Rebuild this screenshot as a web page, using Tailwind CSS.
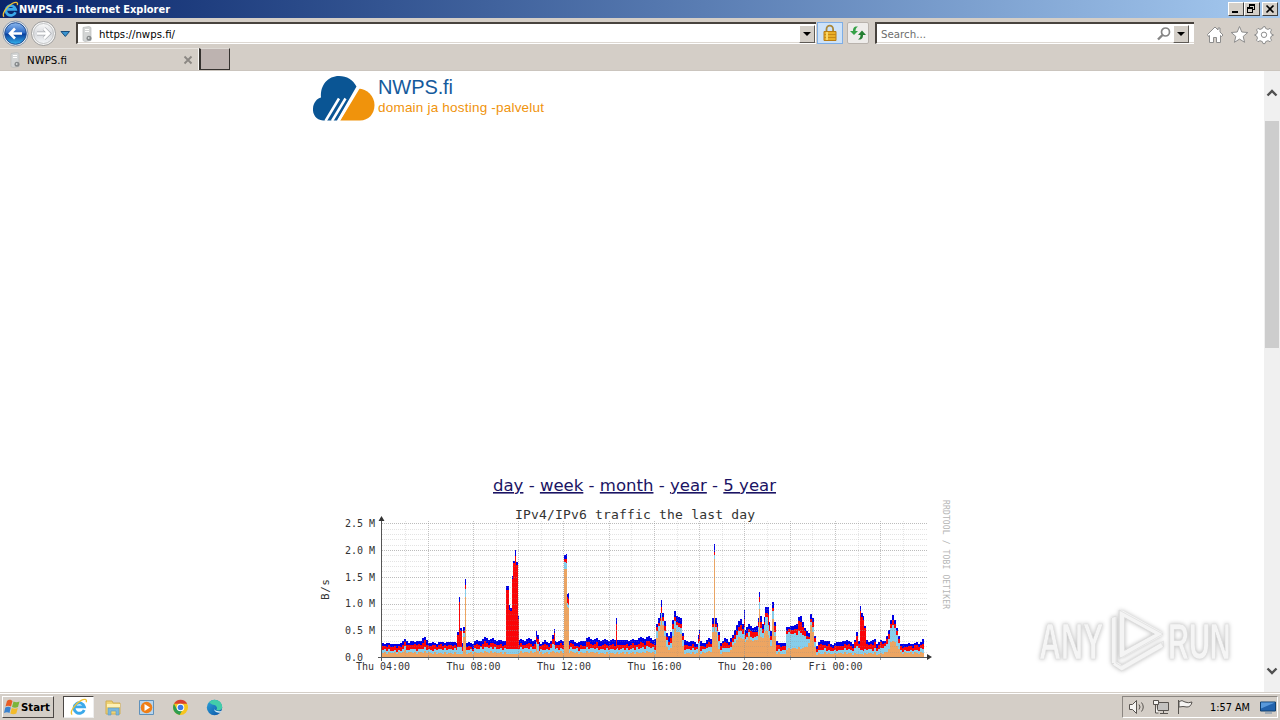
<!DOCTYPE html>
<html lang="en">
<head>
    <meta charset="UTF-8" />
    <meta name="viewport" content="width=device-width, initial-scale=1.0"/>
    <title>NWPS.fi - Internet Explorer</title>
    <script src="https://cdn.jsdelivr.net/npm/@tailwindcss/browser@4"></script>
</head>
<body class="w-[1280px] h-[720px] overflow-hidden bg-white text-black font-['DejaVu_Sans',sans-serif] text-[11px] flex flex-col">

<!-- shared shapes -->
<svg class="absolute w-0 h-0">
    <defs>
        <linearGradient id="blueBtn" x1="0" y1="0" x2="0" y2="1"><stop offset="0" stop-color="#8cb8ee"/><stop offset=".48" stop-color="#2a68c4"/><stop offset=".52" stop-color="#073d9c"/><stop offset="1" stop-color="#36b5ee"/></linearGradient>
        <linearGradient id="greyBtn" x1="0" y1="0" x2="0" y2="1"><stop offset="0" stop-color="#fafafa"/><stop offset=".5" stop-color="#d8dade"/><stop offset="1" stop-color="#f4f6f8"/></linearGradient>
        <linearGradient id="edgeFill" x1="0" y1="0" x2="1" y2="1"><stop offset="0" stop-color="#2fa4da"/><stop offset="1" stop-color="#0a51a5"/></linearGradient>
        <symbol id="ie" viewBox="0 0 20 20">
            <path d="M15.8 13.2A5.8 5.8 0 1 1 16 9.8H5.500" fill="none" stroke="#3ba9ea" stroke-width="3.200"/>
            <path d="M2.300 18.500C-.5 15.500 5 7 12 3c4-2.300 7.200-2 6 1.800" fill="none" stroke="#f0c233" stroke-width="1.500"/>
        </symbol>
        <symbol id="site" viewBox="0 0 14 16">
            <path d="M3 1.500 9 .5l2 1v13l-6 1-2-1z" fill="#d3d5d5" stroke="#b9bbbb" stroke-width=".7"/>
            <path d="M5 3.500h4M5 5.500h4" stroke="#fff"/>
            <circle cx="9" cy="12.300" r="2.500" fill="#85898b"/><circle cx="8.700" cy="12" r=".9" fill="#d8dcdc"/>
        </symbol>
    </defs>
</svg>

<!-- title bar -->
<header class="h-[18px] shrink-0 flex items-center bg-linear-to-r from-[#0a246a] to-[#a6caf0] pl-[2px] pr-[2px]">
    <svg class="w-[17px] h-[17px]"><use href="#ie"/></svg>
    <svg class="block w-[152px] h-[14px] overflow-visible"><text x="0" y="11" textLength="151" lengthAdjust="spacingAndGlyphs" fill="#fff" font-size="10.500" font-weight="bold">NWPS.fi - Internet Explorer</text></svg>
    <span class="flex-1"></span>
    <div class="flex">
        <button class="w-[16px] h-[14px] bg-[#d4cfc8] border border-t-white border-l-white border-r-[#404040] border-b-[#404040]"><svg class="block w-[14px] h-[12px]"><path d="M3 9h6" stroke="#000" stroke-width="2"/></svg></button>
        <button class="w-[16px] h-[14px] bg-[#d4cfc8] border border-t-white border-l-white border-r-[#404040] border-b-[#404040]"><svg class="block w-[14px] h-[12px]" fill="none" stroke="#000" shape-rendering="crispEdges"><path d="M4 1.500h6M4.500 1v3M9.500 1v5.500H8M4 2.500h6M2 4.500h6M2 5.500h6M2.500 4v5.500h5V4"/></svg></button>
        <button class="ml-[2px] w-[16px] h-[14px] bg-[#d4cfc8] border border-t-white border-l-white border-r-[#404040] border-b-[#404040]"><svg class="block w-[14px] h-[12px]"><path d="m3.500 2.500 7 7m0-7-7 7" stroke="#000" stroke-width="1.700"/></svg></button>
    </div>
</header>

<!-- navigation -->
<nav class="h-[30px] shrink-0 flex items-start bg-[#d4cec7] pt-[2px]">
    <svg class="w-[76px] h-[28px] shrink-0">
        <circle cx="15.500" cy="13.500" r="12.500" fill="#f3f5f7" stroke="#70859f" stroke-width=".8"/>
        <circle cx="15.500" cy="13.500" r="10.800" fill="url(#blueBtn)" stroke="#234f92"/>
        <path d="M22 13.500H10m5-5-5 5 5 5" fill="none" stroke="#fff" stroke-width="2.600"/>
        <circle cx="43.500" cy="13.500" r="12" fill="#f6f6f6" stroke="#8c8c8c" stroke-width=".8"/>
        <circle cx="43.500" cy="13.500" r="10" fill="url(#greyBtn)" stroke="#b4b6b8" stroke-width=".8"/>
        <path d="M37 13.500h12m-5-5 5 5-5 5" fill="none" stroke="#a5a8ad" stroke-width="3.800"/>
        <path d="M37 13.500h12m-5-5 5 5-5 5" fill="none" stroke="#fff" stroke-width="2.500"/>
        <path d="M61 11.500h8.500l-4.200 5z" fill="#3893cf" stroke="#184d7d"/>
    </svg>
    <div class="mt-[2px] w-[740px] h-[22px] bg-white border-t-2 border-l-2 border-t-[#48433e] border-l-[#48433e] border-b border-b-white flex items-center shadow-[inset_0_-1px_#ddd8d2]">
        <svg class="ml-[2px] w-[14px] h-[16px]"><use href="#site"/></svg>
        <svg class="ml-[5px] w-[80px] h-[16px] overflow-visible"><text y="12" textLength="76" font-size="11" lengthAdjust="spacingAndGlyphs">https://nwps.fi/</text></svg>
        <span class="flex-1"></span>
        <button class="mr-[1px] w-[16px] h-[18px] bg-[#d4cfc8] border border-t-white border-l-white border-r-[#5e5a55] border-b-[#5e5a55]"><svg class="block w-[14px] h-[16px]"><path d="M3 6h8l-4 4z"/></svg></button>
    </div>
    <div class="ml-[1px] mt-[2px] w-[26px] h-[22px] bg-[#cde2f8] border border-[#7eaee6] flex justify-center items-center">
        <svg class="w-[16px] h-[18px]"><path d="M4.500 9V5.200a3.300 3.500 0 0 1 6.600 0V9" fill="none" stroke="#a98739" stroke-width="1.800"/><path d="M2 7.500h12v9H2z" fill="#e9af28" stroke="#b77c14"/><path d="M2 10.500h12M2 13.500h12" stroke="#c78916"/><path d="M4 8h2v8H4z" fill="#f7d669"/></svg>
    </div>
    <div class="ml-[4px] mt-[2px] w-[22px] h-[22px] rounded-[2px] bg-[#eeecea] border border-[#b9b3ad] flex justify-center items-center">
        <svg class="w-[18px] h-[16px]"><path d="M9 1.500C5 1 4 3 4 6H1l4 4 4-4H6.500c0-2 .5-3 2.500-4.500z" fill="#35a146"/><path d="M9 14.500c4 .5 5-1.500 5-4.500h3l-4-4.500L9 10h2.500c0 2-.5 3-2.500 4.500z" fill="#247f32"/></svg>
    </div>
    <div class="ml-[6px] mt-[2px] w-[319px] h-[22px] bg-white border-t-2 border-l-2 border-t-[#48433e] border-l-[#48433e] border-b border-b-white flex items-center shadow-[inset_0_-1px_#ddd8d2]">
        <svg class="ml-[4px] w-[50px] h-[16px] overflow-visible"><text y="12" textLength="45" font-size="11" fill="#6d6d6d" lengthAdjust="spacingAndGlyphs">Search...</text></svg>
        <span class="flex-1"></span>
        <svg class="w-[16px] h-[16px]"><circle cx="9.500" cy="6" r="4" fill="none" stroke="#858585" stroke-width="1.700"/><path d="m6.500 9-4.500 4.500" stroke="#858585" stroke-width="2.400"/></svg>
        <button class="ml-[1px] mr-[5px] w-[16px] h-[18px] bg-[#d4cfc8] border border-t-white border-l-white border-r-[#5e5a55] border-b-[#5e5a55]"><svg class="block w-[14px] h-[16px]"><path d="M3 6h8l-4 4z"/></svg></button>
    </div>
    <svg class="ml-[11px] w-[75px] h-[28px]" fill="#fff" stroke="#8d8d8d">
        <path d="M2.500 14.500 10 7l3 3V8h2v4l3 3-1.500 1.500-1-1v7h-4v-5h-3v5h-4v-7l-1 1z"/>
        <path d="m34.500 6.500 2.300 5.500 6 .5-4.600 3.900 1.400 5.900-5.100-3.200-5.100 3.200 1.400-5.900-4.600-3.900 6-.5z"/>
        <path d="m58 7 2-.5.700 2 2.300.9 2-1 1.500 1.500-1 2 .9 2.200 2.100.9-2.100 1-.9 2.200 1 2-1.500 1.500-2-1-2.300.9-.7 2h-2l-.7-2-2.300-.9-2 1-1.500-1.500 1-2-.9-2.200-2.100-1 2.100-.9.900-2.200-1-2 1.500-1.500 2 1 2.300-.9z"/><circle cx="59" cy="14.800" r="2.700"/>
    </svg>
</nav>

<!-- tabs -->
<div class="h-[23px] shrink-0 flex bg-[#d4cec7] border-b border-[#cbc5be]">
    <div class="w-[199px] flex items-center border-r border-[#f8f7f5] border-t border-t-[#e8e4df] pl-[8px]">
        <svg class="w-[14px] h-[16px]"><use href="#site"/></svg>
        <svg class="ml-[5px] w-[42px] h-[16px] overflow-visible"><text y="12" textLength="40" font-size="11" lengthAdjust="spacingAndGlyphs">NWPS.fi</text></svg>
        <svg class="ml-[114px] w-[10px] h-[10px]"><path d="m1.500 1.500 7 7m0-7-7 7" stroke="#8b8783" stroke-width="1.800"/></svg>
    </div>
    <div class="w-[31px] h-[22px] bg-[#bdb3b0] border border-l-2 border-[#35322f] border-t-[#dedad5]"></div>
</div>

<!-- page -->
<main class="h-[621px] shrink-0 flex relative">
    <div class="w-[1264px] flex flex-col">
        <div class="h-[398px] pl-[311px] pt-[2px]">
            <svg class="w-[240px] h-[52px]">
                <path d="M12 47.500C5 47 1.500 41 2 35.500c.3-6 4-10 8-11C9 12 17 3 28 3c8 0 14 4 17.500 10.500L26 47.500z" fill="#0a5594"/>
                <path d="M29 47.500 47.500 15.500C56 16 63.500 23 63.500 32c0 9-6 15.500-14.500 15.500z" fill="#f0930c"/>
                <path d="m14.500 48 13.500-22.500m-7 22.500L34.500 25.500m-7 22.500 20.500-34" stroke="#fff" stroke-width="2.500"/>
                <text x="67" y="21" font-size="20" textLength="75" fill="#155a9c" font-family="Liberation Sans">NWPS.fi</text>
                <text x="67" y="38.500" font-size="13.500" textLength="166" fill="#f0930c" font-family="Liberation Sans">domain ja hosting -palvelut</text>
            </svg>
        </div>
        <div class="h-[31px] pl-[493px] pt-[4px]">
            <svg class="w-[290px] h-[26px] overflow-visible" font-size="16" fill="#1b1464">
                <text y="18" textLength="283" lengthAdjust="spacingAndGlyphs"><tspan text-decoration="underline">day</tspan> - <tspan text-decoration="underline">week</tspan> - <tspan text-decoration="underline">month</tspan> - <tspan text-decoration="underline">year</tspan> - <tspan text-decoration="underline">5 year</tspan></text>
            </svg>
        </div>
        <div class="pl-[310px]">
            <svg id="chart" class="block w-[650px] h-[180px]" viewBox="310 500 650 180" font-family="DejaVu Sans Mono" fill="#333"></svg>
        </div>
    </div>
    <div class="w-[16px] bg-[#f0f0f0] flex flex-col items-center">
        <svg class="w-[16px] h-[50px]"><path d="m3.500 24.500 4.500-4.500 4.500 4.500" fill="none" stroke="#505050" stroke-width="2.400"/></svg>
        <div class="w-[14px] h-[227px] bg-[#cdcdcd]"></div>
        <span class="flex-1"></span>
        <svg class="w-[16px] h-[50px]"><path d="m3.500 26.500 4.500 4.500 4.500-4.500" fill="none" stroke="#505050" stroke-width="2.400"/></svg>
    </div>
    <!-- watermark over the page -->
    <svg class="absolute left-[1030px] top-[529px] w-[210px] h-[80px] overflow-visible drop-shadow-[0_0_2px_#bbb]" fill="#f5f5f5" stroke="#dcdcdc" stroke-width=".7" font-family="Liberation Sans" font-size="50" font-weight="bold">
        <text transform="translate(9 59) scale(.61 1)">ANY</text>
        <text transform="translate(138 59) scale(.58 1)">RUN</text>
        <g fill="none" stroke-width="5" stroke="#f4f4f4" stroke-linejoin="round"><path d="M92 13v42l38-21zM84 17v46M84 63l8 5 40-23"/></g>
        <g fill="none"><path d="M89 10v49l44-25zM94.500 18v32l29-16zM81.500 18v46l10 7 42-24v-6L91 66l-5-3V16z"/></g>
    </svg>
</main>

<!-- taskbar -->
<footer class="h-[28px] shrink-0 flex bg-[#d4cec7] border-t border-[#d4cec7] shadow-[inset_0_1px_#fff] pt-[3px] pl-[2px]">
    <button class="w-[52px] h-[22px] flex items-center border border-t-white border-l-white border-r-[#4b4744] border-b-[#4b4744]">
        <svg class="ml-[1px] w-[17px] h-[18px]"><path d="M3 3c2-2 4-1 5.500 0L7 8.500C5 7.500 3 7.500 1.500 8.500z" fill="#e85c24"/><path d="M9.500 3.500c2 1 4 1 6 0L14 9c-2 1-4 1-6 0z" fill="#7bb53b"/><path d="M1.300 9.500c2-1 4-1 5.500 0L5.500 15C4 14 2 14 0 15z" fill="#3a82cf"/><path d="M7.800 10c2 1 4 1 6 0l-1.500 5.500c-2 1-4 1-6 0z" fill="#f3bb2a"/></svg>
        <svg class="w-[30px] h-[16px] overflow-visible"><text y="12" font-size="11" font-weight="bold" textLength="29" lengthAdjust="spacingAndGlyphs">Start</text></svg>
    </button>
    <div class="ml-[9px] w-[31px] h-[22px] bg-white border border-t-[#4b4744] border-l-[#4b4744] border-r-[#eee] border-b-[#eee] flex items-center justify-center"><svg class="w-[18px] h-[18px]"><use href="#ie"/></svg></div>
    <svg class="ml-[10px] mt-[1px] w-[124px] h-[22px]">
        <path d="M2 4h6l1 2h7v11H2z" fill="#efd374" stroke="#d1ad50"/><path d="M3 7h13v3H3z" fill="#fff1b4"/><path d="M4 18v-7h11v7h-3v-4H7v4z" fill="#7bb7dc" stroke="#5e9ac0" stroke-width=".6"/>
        <path d="M35.500 3.500h14v14h-14z" fill="#b8d5ed" stroke="#5f91bb"/><circle cx="42.500" cy="10.500" r="5.800" fill="#f07f17"/><path d="M40.500 7v7l5.500-3.500z" fill="#fff"/>
        <circle cx="76.500" cy="10.500" r="7.500" fill="#f7c51d"/><path d="M70 6.800a7.500 7.500 0 0 1 13.200 0h-6.700z" fill="#db3f2f"/><path d="M70 6.800a7.500 7.500 0 0 0 5.600 11.100l3-5.200-5.400 0z" fill="#2d9d50"/><circle cx="76.500" cy="10.500" r="3.800" fill="#fff"/><circle cx="76.500" cy="10.500" r="2.800" fill="#3d79e5"/>
        <circle cx="110.500" cy="10.500" r="7.700" fill="url(#edgeFill)"/><path d="M105 5.200a7.600 7.600 0 0 1 13.200 4.800c0 3-3 4-6 3 2-2 0-5-3-5.200-1.500-.3-3-1.600-4.200-2.600z" fill="#43cda9"/><path d="M111 10c-2 2 0 5 6.500 4l-1 1.500c-4 1-8-2-5.500-5.500z" fill="#d8eef5"/>
    </svg>
    <span class="flex-1"></span>
    <div class="w-[156px] h-[22px] mr-[2px] flex items-center border border-t-[#8b8681] border-l-[#8b8681] border-r-white border-b-white">
        <svg class="ml-[6px] w-[68px] h-[20px]" fill="#f5f4f2" stroke="#57534f">
            <path d="M.5 7.500h3l4-4v13l-4-4h-3z"/><path d="M10 7.500q2 2.500 0 5M12.500 5.500q3.500 4.500 0 9" fill="none"/>
            <path d="M28.500 5.500h11v8h-11z" fill="#c3c2c0"/><path d="M31 16.500h8M34.500 14v2" /><path d="M24.500 3.500h5v4h-5zM26.500 8v8h3" fill="#f5f4f2"/>
            <path d="M49.500 3v14" /><path d="M50 4.500q3-2 6 .5 3 1.500 7 0-1 5-5 5-4-1-8 0z"/>
        </svg>
        <svg class="ml-[13px] w-[40px] h-[16px] overflow-visible"><text y="12" font-size="11" textLength="40" lengthAdjust="spacingAndGlyphs">1:57 AM</text></svg>
        <svg class="ml-[10px] w-[16px] h-[16px]"><path d="M.5 3h15v9H.5z" fill="#2363ad" stroke="#11406f"/><path d="M1 3.500h14l-14 6z" fill="#5999db"/><path d="M5 14h7" stroke="#6f89a5"/></svg>
    </div>
</footer>

<script>
    // stacked heights in px above the axis: x, width, total, red, light blue, orange
    const peaks = [
        [457,2,25,22,10,3],[459,1,60,55,10,3],[460,2,29,26,10,3],[463,2,30,26,24,20],[465,1,78,72,68,60],
        [506,3,71,67,8,3],[509,1,52,47,8,3],[510,2,49,46,8,3],[512,1,81,78,8,3],[513,2,96,94,8,3],[515,1,107,101,8,3],[516,2,95,92,8,3],[518,1,41,38,8,3],
        [536,1,26,20,15,12],[537,2,22,18,13,6],[552,2,22,18,13,6],[554,1,28,24,12,5],
        [564,2,102,98,95,88],[566,1,103,98,94,88],[567,1,63,60,54,50],[568,1,64,58,52,49],
        [616,1,39,33,8,4],[661,1,57,50,44,38],[698,1,22,18,14,8],[699,1,27,23,16,9],
        [712,2,39,33,30,25],[714,1,113,105,102,98],[715,2,39,33,30,25],[717,1,34,30,26,16],[718,2,25,22,16,8],
        [744,1,47,38,30,20],[759,1,65,60,55,48],[765,3,50,44,40,26],[768,1,50,42,32,22],[772,2,55,49,46,38],
        [860,1,51,46,7,3],[861,2,44,40,7,3]
    ];
    const shape = [
        [382,14,11,7,4],[400,13,10,6,4],[404,19,15,10,6],[408,13,10,6,4],[411,18,14,9,5],[415,14,11,7,4],[423,19,15,9,5],[430,14,11,7,4],[447,15,12,8,4],[470,14,10,7,4],[486,19,14,10,5],[500,16,12,8,4],[530,18,13,9,5],[540,15,12,7,4],[570,17,13,9,5],[579,14,10,7,4],[586,19,14,9,5],[600,17,12,8,4],[630,17,12,8,4],[649,20,15,10,5],[655,17,12,8,4],
        [656,32,28,25,18],[659,43,38,34,30],[661,47,43,38,34],[663,40,36,33,29],[666,24,20,16,9],[669,20,14,10,6],[671,29,24,20,14],[673,44,40,34,26],[675,48,42,39,33],[677,34,28,24,17],[679,46,40,36,32],[681,32,28,24,16],[683,16,12,8,4],[695,15,11,8,4],[701,14,10,7,4],[711,19,15,11,6],[721,15,12,8,4],[725,20,15,10,6],[728,15,12,8,4],[733,24,20,16,13],[737,34,28,24,19],[740,39,33,27,20],[744,26,21,18,15],[748,34,29,24,20],[752,28,23,18,15],[756,32,27,22,18],[759,42,37,33,22],[762,33,28,24,19],[765,46,41,36,26],[770,26,22,18,12],[772,50,44,38,34],[775,27,23,18,14],[776,15,12,7,4],[784,14,10,7,3],[786,30,27,24,8],[796,32,28,23,9],[799,45,39,26,9],[804,28,24,20,9],[808,25,21,17,13],[810,43,38,35,32],[812,38,34,30,25],[814,22,19,14,9],[816,13,10,6,3],[823,18,13,8,4],[830,13,10,6,3],[839,15,11,7,4],[846,17,13,8,4],[853,13,10,6,3],[856,24,21,12,4],[858,16,13,9,3],[859,36,33,7,3],[863,42,38,7,3],[865,18,15,8,4],[872,15,11,7,4],[873,21,17,9,4],[876,14,11,7,3],[885,18,15,11,4],[889,29,25,21,10],[891,46,41,36,18],[894,37,32,28,14],[897,25,22,19,10],[900,13,10,6,4],[919,14,11,7,4],[921,19,15,10,5],[924,14,10,6,4]
    ];
    const colors = ["#0000e6", "#fa0508", "#87ceeb", "#eda562"];
    const base = 657;
    let out = "";

    function line(x1, y1, x2, y2, color, dash) {
        out += `<path d="M${x1} ${y1}L${x2} ${y2}" stroke="${color}" stroke-dasharray="${dash || "none"}" fill="none"/>`;
    }
    function label(x, y, text, size, len) {
        out += `<text x="${x}" y="${y}" font-size="${size}" textLength="${len}">${text}</text>`;
    }
    function column(x, w, h) {
        h.forEach((v, i) => out += `<rect x="${x}" y="${base - v}" width="${w}" height="${v}" fill="${colors[i]}"/>`);
    }

    // data
    out += '<g shape-rendering="crispEdges">';
    for (let x = 382; x < 924; x += 2) {
        const n = shape.findIndex(p => p[0] > x);
        const a = shape[n - 1], b = shape[n];
        const t = (x - a[0]) / (b[0] - a[0]);
        const j = Math.sin(x * 2.3) * .8 + Math.sin(x * 0.73) * .8;
        const k = Math.sin(x * 1.9);
        column(x, 2, [1, 2, 3, 4].map(i => Math.round(a[i] + (b[i] - a[i]) * t + (i < 3 ? j : k) + (i === 2 ? k * .7 : 0))));
    }
    peaks.forEach(p => column(p[0], p[1], p.slice(2)));

    // grid
    for (let i = 1; i <= 25; i++) {
        const y = Math.round(base - i * 5.35) + .5;
        line(382, y, 927, y, i % 5 ? "#8f8f8f40" : "#8f8f8f99", "1 1");
    }
    for (let i = 1; i <= 23; i++) {
        const x = Math.round(382.5 + i * 22.62) + .5;
        line(x, 521, x, 657, i % 2 ? "#8f8f8f38" : "#8f8f8f88", "1 1");
        if (i % 2 === 0) line(x, 656, x, 660, "#999");
    }
    line(381.5, 519, 381.5, 661, "#555");
    line(378, 657.5, 929, 657.5, "#555");
    out += '</g><path d="m378.500 521 3-5 3 5zM927 654l5 3-5 3z"/>';

    ["2.5 M", "2.0 M", "1.5 M", "1.0 M", "0.5 M"].forEach((s, i) => label(345, 527 + i * 26.8, s, 10, 30));
    label(345, 661, "0.0", 10, 18);
    ["Thu 04:00", "Thu 08:00", "Thu 12:00", "Thu 16:00", "Thu 20:00", "Fri 00:00"].forEach((s, i) => label(356 + i * 90.5, 670, s, 10, 54));
    label(515, 519, "IPv4/IPv6 traffic the last day", 13, 240);
    out += '<text transform="translate(329 600) rotate(-90)" font-size="11" textLength="21">B/s</text>';
    out += '<text transform="translate(943 500) rotate(90)" font-size="8" textLength="109" fill="#b5b5b5">RRDTOOL / TOBI OETIKER</text>';
    document.getElementById("chart").innerHTML = out;
</script>
</body>
</html>
